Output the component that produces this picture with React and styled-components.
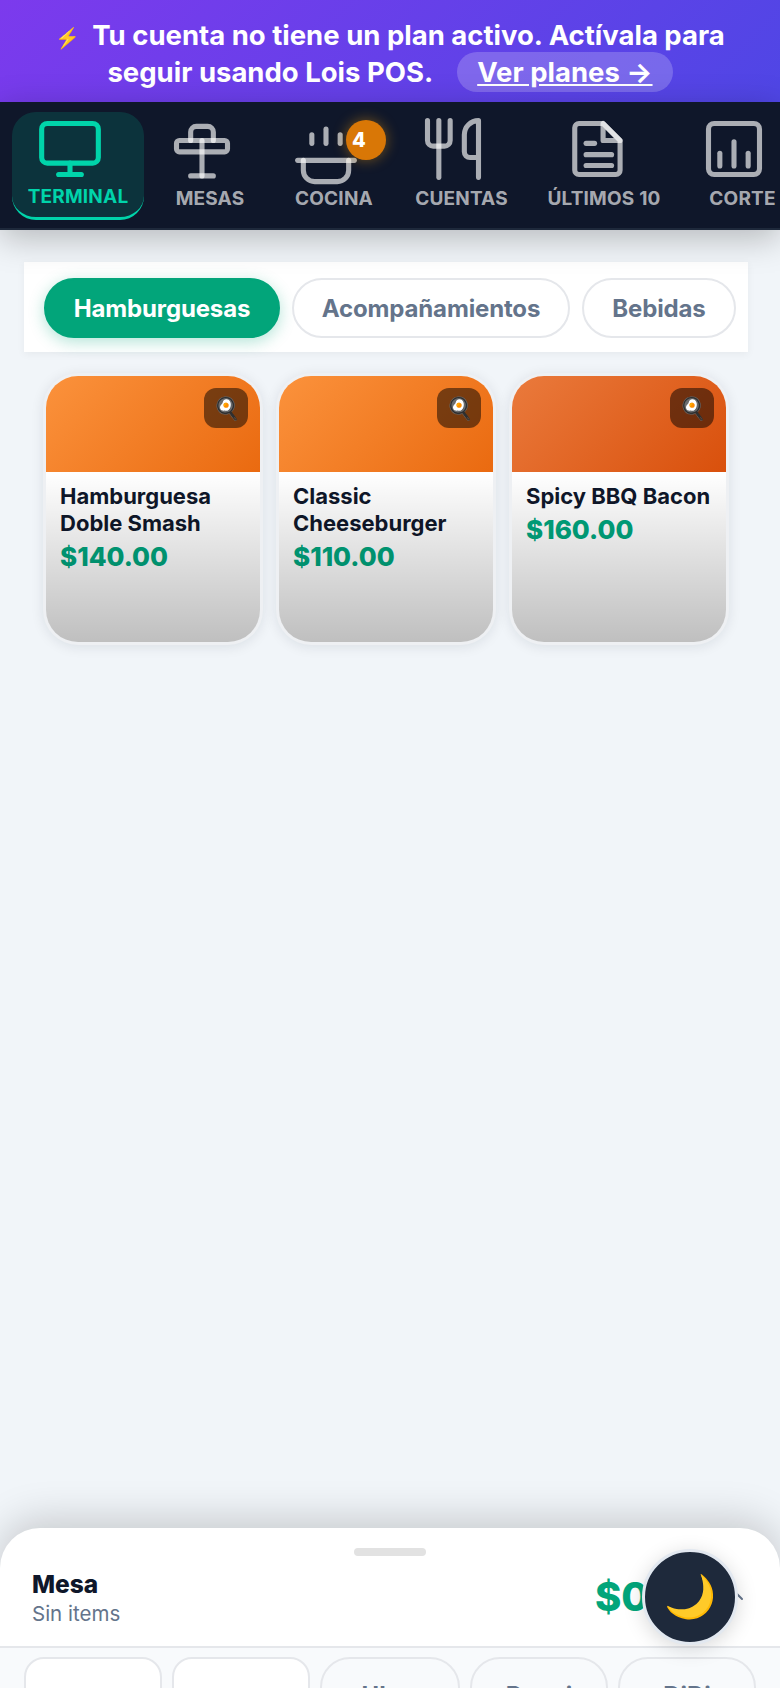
import React from "react";
import styled, { createGlobalStyle } from "styled-components";
import { Monitor, Utensils, ChevronUp } from "lucide-react";

const GlobalStyle = createGlobalStyle`
  * { box-sizing: border-box; }
  html, body { margin: 0; padding: 0; }
  body { font-family: Inter, "Noto Sans", sans-serif; background: #f1f5f9; }
`;

const Page = styled.div`
  position: relative;
  width: 780px;
  height: 1688px;
  overflow: hidden;
  display: flex;
  flex-direction: column;
  background: #f1f5f9;
`;

const Banner = styled.div`
  height: 102px;
  padding: 17px 20px 0;
  text-align: center;
  color: #fff;
  font-size: 27.5px;
  line-height: 37px;
  font-weight: 700;
  background: linear-gradient(135deg, #7c3aed, #4f46e5);
`;

const Bolt = styled.span`
  font-size: 20px;
  line-height: 0;
  margin-right: 12px;
`;

const PlansLink = styled.a`
  margin-left: 24px;
  padding: 3px 20px;
  border-radius: 20px;
  color: #fff;
  text-decoration: underline;
  background: rgba(255, 255, 255, 0.2);
`;

const Nav = styled.nav`
  position: relative;
  z-index: 2;
  height: 128px;
  flex-shrink: 0;
  display: flex;
  align-items: flex-start;
  padding: 10px 0 0 12px;
  overflow: hidden;
  background: #0f172a;
  border-bottom: 2px solid #1e293b;
  box-shadow: 0 8px 32px rgba(0, 0, 0, 0.25);
`;

const NavItem = styled.div`
  position: relative;
  flex: 0 0 ${(p) => p.$w}px;
  height: 108px;
  padding-top: 3px;
  display: flex;
  flex-direction: column;
  align-items: center;
  border-radius: 24px;
  color: ${(p) => (p.$active ? "#00d4aa" : "rgba(255,255,255,0.65)")};
  background: ${(p) => (p.$active ? "rgba(0,212,170,0.15)" : "transparent")};
  border-bottom: 3px solid ${(p) => (p.$active ? "#00d4aa" : "transparent")};

  svg {
    display: block;
    flex: 0 0 68px;
    width: 68px;
    height: 68px;
    margin-right: 17px;
    overflow: visible;
  }
`;

const NavLabel = styled.span`
  margin-top: ${(p) => (p.$active ? 3 : 5)}px;
  font-size: 19px;
  line-height: 22px;
  font-weight: 700;
  letter-spacing: 0.2px;
  white-space: nowrap;
`;

const CountBadge = styled.span`
  position: absolute;
  top: 8px;
  left: 70px;
  width: 40px;
  height: 40px;
  padding-right: 14px;
  border-radius: 50%;
  display: flex;
  align-items: center;
  justify-content: center;
  color: #fff;
  font-size: 20px;
  font-weight: 800;
  background: #d97706;
  box-shadow: 0 0 14px rgba(245, 158, 11, 0.45);
`;

const Main = styled.main`
  flex: 1;
  min-height: 0;
  padding: 32px 32px 0 24px;
`;

const TabBar = styled.div`
  display: flex;
  gap: 12px;
  height: 90px;
  padding: 16px 20px;
  background: #fff;
  box-shadow: 0 2px 8px rgba(0, 0, 0, 0.05);
`;

const Tab = styled.button`
  flex: 0 0 ${(p) => p.$w}px;
  height: 60px;
  padding: 0;
  border-radius: 30px;
  border: 2px solid ${(p) => (p.$active ? "#02a57a" : "#e5e7eb")};
  font-family: inherit;
  font-size: 24px;
  font-weight: 700;
  letter-spacing: -0.15px;
  color: ${(p) => (p.$active ? "#fff" : "#64748b")};
  background: ${(p) => (p.$active ? "#02a57a" : "#fff")};
  box-shadow: ${(p) => (p.$active ? "0 4px 16px rgba(2,165,122,0.3)" : "none")};
`;

const Grid = styled.div`
  display: grid;
  grid-template-columns: repeat(3, 214px);
  column-gap: 19px;
  margin: 24px 0 0 22px;
`;

const Card = styled.article`
  height: 266px;
  border-radius: 32px;
  overflow: hidden;
  display: flex;
  flex-direction: column;
  background: #fff;
  box-shadow: 0 0 0 3px #eef0f3, 0 2px 14px 2px rgba(15, 23, 42, 0.11);
`;

const CardImage = styled.div`
  flex: 0 0 96px;
  display: flex;
  justify-content: flex-end;
  align-items: flex-start;
  padding: 12px 12px 0 0;
  background: linear-gradient(135deg, ${(p) => p.$from}, ${(p) => p.$to});
`;

const EmojiTag = styled.span`
  width: 44px;
  height: 40px;
  border-radius: 12px;
  display: flex;
  align-items: center;
  justify-content: center;
  font-size: 22px;
  background: rgba(0, 0, 0, 0.5);
`;

const CardBody = styled.div`
  position: relative;
  flex: 1;
  padding: 11px 14px;

  &::after {
    content: "";
    position: absolute;
    inset: 0;
    background: linear-gradient(rgba(0, 0, 0, 0), rgba(0, 0, 0, 0.25));
  }
`;

const CardName = styled.div`
  font-size: 22px;
  line-height: 27px;
  font-weight: 700;
  color: #0f172a;
`;

const CardPrice = styled.div`
  margin-top: 3px;
  font-size: 26px;
  line-height: 34px;
  font-weight: 800;
  color: #00a67e;
`;

const Sheet = styled.section`
  position: relative;
  z-index: 3;
  flex: 0 0 160px;
  height: 160px;
  overflow: hidden;
  display: flex;
  flex-direction: column;
  border-radius: 40px 40px 0 0;
  background: #fff;
  box-shadow: 0 -8px 40px rgba(0, 0, 0, 0.18);
`;

const Handle = styled.div`
  flex: 0 0 8px;
  width: 72px;
  margin: 20px auto 0;
  border-radius: 4px;
  background: #e2e2e2;
`;

const SheetHead = styled.div`
  flex: 0 0 92px;
  display: flex;
  justify-content: space-between;
  padding: 13px 32px 0;
  border-bottom: 2px solid #e5e7eb;
`;

const TableName = styled.div`
  font-size: 24.5px;
  line-height: 30px;
  font-weight: 800;
  color: #0f172a;
`;

const ItemCount = styled.div`
  margin-top: 2px;
  font-size: 20.5px;
  line-height: 26px;
  color: #64748b;
`;

const TotalRow = styled.div`
  display: flex;
  align-items: center;
  gap: 8px;
  height: 54px;
  color: #64748b;
`;

const Total = styled.span`
  font-size: 40px;
  font-weight: 800;
  color: #02a57a;
`;

const Channels = styled.div`
  flex: 1;
  display: flex;
  gap: 10px;
  padding: 9px 24px 0;
  background: #f8fafc;
`;

const Channel = styled.div`
  flex: 0 0 ${(p) => p.$w}px;
  height: 70px;
  padding-top: 22px;
  text-align: center;
  border: 2px solid #e5e7eb;
  border-radius: ${(p) => (p.$filled ? 20 : 30)}px;
  font-size: 24px;
  line-height: 30px;
  font-weight: 700;
  color: #64748b;
  background: ${(p) => (p.$filled ? "#fff" : "transparent")};
`;

const ThemeButton = styled.button`
  position: absolute;
  z-index: 5;
  left: 642px;
  top: 1549px;
  width: 96px;
  height: 96px;
  padding: 0;
  border-radius: 50%;
  border: 3px solid #e2e8f0;
  font-size: 42px;
  line-height: 1;
  background: #1e293b;
  box-shadow: 0 4px 20px rgba(0, 0, 0, 0.15);
`;

const STROKE = 1.8;

const Icon = ({ children }) => (
  <svg
    viewBox="0 0 24 24"
    fill="none"
    stroke="currentColor"
    strokeWidth={STROKE}
    strokeLinecap="round"
    strokeLinejoin="round"
  >
    {children}
  </svg>
);

const TableIcon = () => (
  <Icon>
    <path d="M8 9V6a2 2 0 0 1 2-2h4a2 2 0 0 1 2 2v3" />
    <rect x="3" y="9" width="18" height="4" rx="1" />
    <path d="M12 9v12.5" />
    <path d="M8 21.5h8" />
  </Icon>
);

const KitchenIcon = () => (
  <Icon>
    <path d="M7 7v3" />
    <path d="M12 5v5" />
    <path d="M17 7v3" />
    <path d="M2 16h20" />
    <path d="M4 16v3.5a4 4 0 0 0 4 4h8a4 4 0 0 0 4-4V16" />
  </Icon>
);

const FileIcon = () => (
  <Icon>
    <path d="M14.5 3H6a1.5 1.5 0 0 0-1.5 1.5v15A1.5 1.5 0 0 0 6 21h13a1.5 1.5 0 0 0 1.5-1.5V9Z" />
    <path d="M14.5 3v6h6Z" />
    <path d="M8.5 10h3" />
    <path d="M8.5 14h9" />
    <path d="M8.5 17.8h9" />
  </Icon>
);

const ChartIcon = () => (
  <Icon>
    <rect x="3" y="3" width="18" height="18" rx="2" />
    <path d="M7 18v-4.5" />
    <path d="M12 18V9.5" />
    <path d="M17 18v-4.5" />
  </Icon>
);

const navItems = [
  { label: "TERMINAL", w: 132, icon: <Monitor strokeWidth={STROKE} />, active: true },
  { label: "MESAS", w: 132, icon: <TableIcon /> },
  { label: "COCINA", w: 116, icon: <KitchenIcon />, badge: 4 },
  { label: "CUENTAS", w: 139, icon: <Utensils strokeWidth={STROKE} /> },
  { label: "ÚLTIMOS 10", w: 146, icon: <FileIcon /> },
  { label: "CORTE", w: 131, icon: <ChartIcon /> },
];

const products = [
  { name: "Hamburguesa Doble Smash", price: "$140.00", from: "#fb923c", to: "#ea6a10" },
  { name: "Classic Cheeseburger", price: "$110.00", from: "#fb923c", to: "#ea6a10" },
  { name: "Spicy BBQ Bacon", price: "$160.00", from: "#ea7a3c", to: "#d9500c" },
];

const App = () => {
  return (
    <Page>
      <GlobalStyle />
      <Banner>
        <Bolt>⚡</Bolt>
        Tu cuenta no tiene un plan activo. Actívala para seguir usando Lois POS.
        <PlansLink href="#">Ver planes →</PlansLink>
      </Banner>

      <Nav>
        {navItems.map((item) => (
          <NavItem key={item.label} $w={item.w} $active={item.active}>
            {item.icon}
            {item.badge && <CountBadge>{item.badge}</CountBadge>}
            <NavLabel $active={item.active}>{item.label}</NavLabel>
          </NavItem>
        ))}
      </Nav>

      <Main>
        <TabBar>
          <Tab $active $w={236}>Hamburguesas</Tab>
          <Tab $w={278}>Acompañamientos</Tab>
          <Tab $w={154}>Bebidas</Tab>
        </TabBar>
        <Grid>
          {products.map((p) => (
            <Card key={p.name}>
              <CardImage $from={p.from} $to={p.to}>
                <EmojiTag>🍳</EmojiTag>
              </CardImage>
              <CardBody>
                <CardName>{p.name}</CardName>
                <CardPrice>{p.price}</CardPrice>
              </CardBody>
            </Card>
          ))}
        </Grid>
      </Main>

      <Sheet>
        <Handle />
        <SheetHead>
          <div>
            <TableName>Mesa</TableName>
            <ItemCount>Sin items</ItemCount>
          </div>
          <TotalRow>
            <Total>$0.00</Total>
            <ChevronUp size={24} />
          </TotalRow>
        </SheetHead>
        <Channels>
          <Channel $filled $w={138} />
          <Channel $filled $w={138} />
          <Channel $w={140}>Uber</Channel>
          <Channel $w={138}>Rappi</Channel>
          <Channel $w={138}>DiDi</Channel>
        </Channels>
      </Sheet>

      <ThemeButton>🌙</ThemeButton>
    </Page>
  );
};

export default App;
